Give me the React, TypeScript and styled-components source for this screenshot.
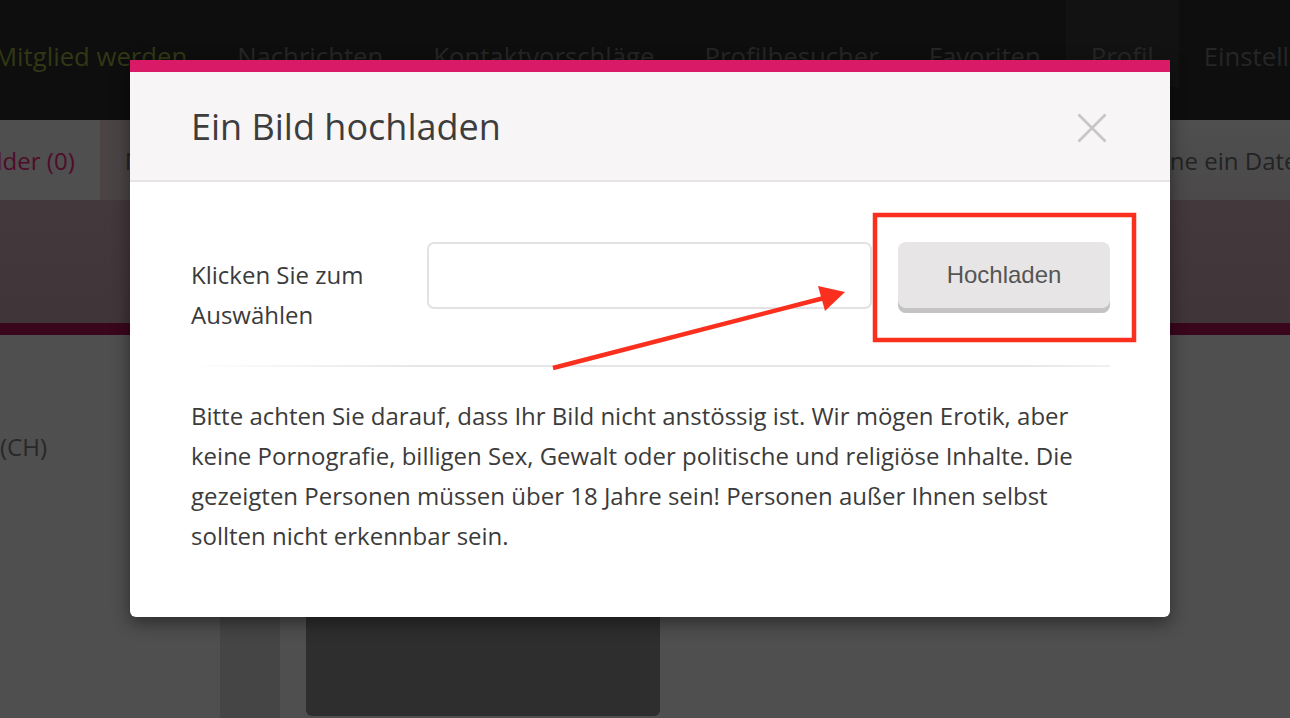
import React from "react";
import styled, { createGlobalStyle } from "styled-components";

const GlobalStyle = createGlobalStyle`
  html, body { margin: 0; padding: 0; }
  body {
    background: #4f4f4f;
    font-family: "Open Sans", "Noto Sans", sans-serif;
    overflow: hidden;
  }
  * { box-sizing: border-box; }
`;

const Page = styled.div`
  position: relative;
  width: 1290px;
  height: 718px;
  overflow: hidden;
  background: #4f4f4f;
`;

const NavBar = styled.nav`
  height: 120px;
  background: #0e0e0e;
  display: flex;
  align-items: flex-start;
  margin-left: -31px;
  white-space: nowrap;
`;

const NavItem = styled.div<{ $highlight?: boolean; $active?: boolean }>`
  height: 87px;
  padding: 39px 25px 0;
  font-size: 25.7px;
  line-height: 36px;
  color: ${(p) => (p.$highlight ? "#313815" : "#262626")};
  background: ${(p) => (p.$active ? "#121212" : "transparent")};
`;

const SubBar = styled.div`
  height: 80px;
  display: flex;
  background: linear-gradient(#4f4f4f, #4b494a);
  white-space: nowrap;
`;

const SubTab = styled.div<{ $tone: "plain" | "warm"; $accent?: boolean }>`
  height: 80px;
  padding: 0 25px;
  display: flex;
  align-items: center;
  font-size: 24px;
  color: ${(p) => (p.$accent ? "#4f0c2a" : "#232323")};
  background: ${(p) => (p.$tone === "warm" ? "#4a4445" : "#4f4f4f")};
`;

const FirstTab = styled(SubTab)`
  margin-left: -50px;
`;

const RightTab = styled(SubTab)`
  margin-left: auto;
  width: 179px;
  overflow: hidden;
  background: transparent;
`;

const Band = styled.div`
  height: 123px;
  background: linear-gradient(#43383c, #403538);
`;

const Stripe = styled.div`
  height: 12px;
  background: #3a061b;
`;

const Content = styled.div`
  display: grid;
  grid-template-columns: 220px 60px 380px 1fr;
  height: 383px;
`;

const Location = styled.div`
  padding-top: 94px;
  font-size: 24px;
  line-height: 36px;
  color: #282828;
`;

const SideColumn = styled.div`
  margin-top: 60px;
  background: #454545;
`;

const PhotoBox = styled.div`
  margin: 200px 0 2px 26px;
  background: #2e2e2e;
  border-radius: 0 0 6px 6px;
`;

const Modal = styled.div`
  position: absolute;
  top: 60px;
  left: 130px;
  width: 1040px;
  background: #ffffff;
  border-radius: 0 0 6px 6px;
  box-shadow: 0 6px 18px rgba(0, 0, 0, 0.45);
  overflow: hidden;
`;

const PinkBar = styled.div`
  height: 12px;
  background: #d91a67;
`;

const Header = styled.div`
  height: 110px;
  padding: 0 63px 0 61px;
  display: flex;
  align-items: center;
  justify-content: space-between;
  background: #f7f5f6;
  border-bottom: 2px solid #e7e4e5;
`;

const Title = styled.h2`
  margin: 0;
  font-size: 36px;
  font-weight: 400;
  line-height: normal;
  color: #3d3d3d;
`;

const CloseButton = styled.button`
  width: 30px;
  height: 30px;
  margin-top: 4px;
  padding: 0;
  border: none;
  background: transparent;
  display: flex;
  cursor: pointer;
`;

const Body = styled.div`
  padding: 60px 60px 61px 61px;
`;

const FormRow = styled.div`
  display: flex;
  align-items: flex-start;
`;

const Label = styled.div`
  width: 236px;
  margin-top: 13px;
  font-size: 24px;
  line-height: 40px;
  color: #3b3b3b;
`;

const FileInput = styled.div`
  width: 445px;
  height: 67px;
  border: 2px solid #e2e2e2;
  border-radius: 7px;
  background: #fff;
`;

const UploadButton = styled.button`
  width: 212px;
  height: 71px;
  margin-left: 26px;
  padding: 0 0 5px;
  border: none;
  border-radius: 8px;
  background: #e8e5e6;
  box-shadow: inset 0 -5px 0 #c5c4c4;
  font-family: "Liberation Sans", Arial, sans-serif;
  font-size: 24px;
  color: #555555;
  cursor: pointer;
`;

const Separator = styled.div`
  height: 2px;
  margin-top: 30px;
  background: linear-gradient(
    to right,
    rgba(230, 230, 232, 0),
    rgba(230, 230, 232, 1) 25%,
    rgba(230, 230, 232, 1) 90%,
    rgba(230, 230, 232, 0.6)
  );
`;

const Notice = styled.p`
  margin: 29px 0 0;
  font-size: 24px;
  line-height: 40px;
  color: #3b3b3b;
`;

const Annotation = styled.svg`
  position: absolute;
  left: 0;
  top: 0;
  width: 1290px;
  height: 718px;
  pointer-events: none;
`;

export default function App() {
  const navItems = [
    "Mitglied werden",
    "Nachrichten",
    "Kontaktvorschläge",
    "Profilbesucher",
    "Favoriten",
    "Profil",
    "Einstellungen",
  ];
  return (
    <Page>
      <GlobalStyle />
      <NavBar>
        {navItems.map((item, i) => (
          <NavItem key={item} $highlight={i === 0} $active={item === "Profil"}>
            {item}
          </NavItem>
        ))}
      </NavBar>
      <SubBar>
        <FirstTab $tone="plain" $accent>
          Bilder (0)
        </FirstTab>
        <SubTab $tone="warm">Neuigkeiten</SubTab>
        <RightTab $tone="plain">Plane ein Date</RightTab>
      </SubBar>
      <Band />
      <Stripe />
      <Content>
        <Location>(CH)</Location>
        <SideColumn />
        <PhotoBox />
        <div />
      </Content>

      <Modal>
        <PinkBar />
        <Header>
          <Title>Ein Bild hochladen</Title>
          <CloseButton aria-label="Schließen">
            <svg width="30" height="30" viewBox="0 0 30 30">
              <path d="M1.5 1.5 L28.5 28.5 M28.5 1.5 L1.5 28.5" stroke="#c6c6c6" strokeWidth="2.6" />
            </svg>
          </CloseButton>
        </Header>
        <Body>
          <FormRow>
            <Label>Klicken Sie zum Auswählen</Label>
            <FileInput />
            <UploadButton>Hochladen</UploadButton>
          </FormRow>
          <Separator />
          <Notice>
            Bitte achten Sie darauf, dass Ihr Bild nicht anstössig ist. Wir mögen Erotik, aber keine
            Pornografie, billigen Sex, Gewalt oder politische und religiöse Inhalte. Die gezeigten
            Personen müssen über 18 Jahre sein! Personen außer Ihnen selbst sollten nicht erkennbar
            sein.
          </Notice>
        </Body>
      </Modal>

      <Annotation viewBox="0 0 1290 718">
        <rect x="875" y="215" width="259" height="125" fill="none" stroke="#fb2f1e" strokeWidth="4.5" />
        <line x1="553" y1="368" x2="824" y2="298" stroke="#fb2f1e" strokeWidth="4.5" />
        <polygon points="845,292 818,286 825,311" fill="#fb2f1e" />
      </Annotation>
    </Page>
  );
}
